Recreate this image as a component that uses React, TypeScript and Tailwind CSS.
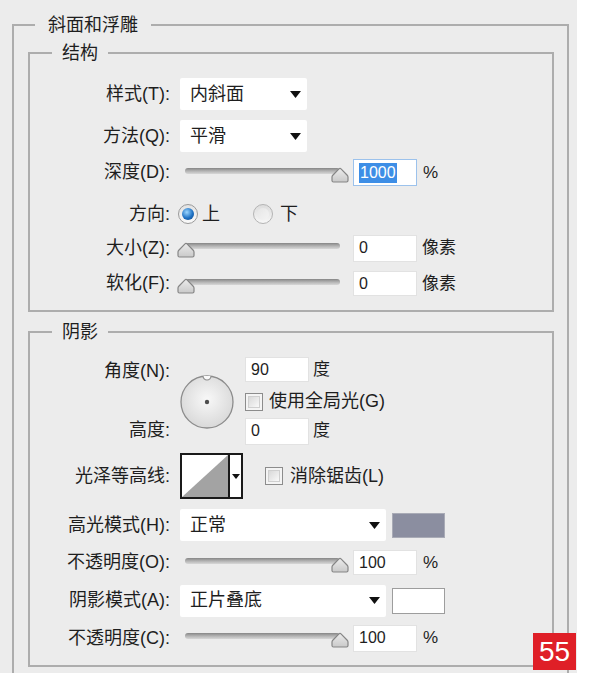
import React from "react";

type Kids = { children?: React.ReactNode };

const Caret = ({ small }: { small?: boolean }) =>
  small ? (
    <svg width="8" height="5" viewBox="0 0 8 5">
      <path d="M0 0H8L4 5Z" fill="#111" />
    </svg>
  ) : (
    <svg width="11" height="7" viewBox="0 0 11 7">
      <path d="M0 0H11L5.5 7Z" fill="#111" />
    </svg>
  );

const Select = ({ value, wide }: { value: string; wide?: boolean }) => (
  <div
    className={`flex h-[32px] items-center justify-between rounded-[2px] bg-white pl-[10px] pr-[6px] text-[18px] ${
      wide ? "w-[206px]" : "w-[127px]"
    }`}
  >
    <span>{value}</span>
    <Caret />
  </div>
);

const NumBox = ({ value, focused, tall }: { value: string; focused?: boolean; tall?: boolean }) => (
  <div
    className={`flex w-[64px] items-center bg-white pl-[5px] text-[16px] ${tall ? "h-[27px]" : "h-[25px]"} ${
      focused ? "border border-[#9cc2ec]" : "border border-[#e2e2e2]"
    }`}
  >
    {focused ? (
      <span className="bg-[#3d8ee6] px-[1px] leading-[20px] text-white">{value}</span>
    ) : (
      <span>{value}</span>
    )}
  </div>
);

const Thumb = () => (
  <svg width="18" height="17" viewBox="0 0 18 17">
    <defs>
      <linearGradient id="tg" x1="0" y1="0" x2="0" y2="1">
        <stop offset="0" stopColor="#ececec" />
        <stop offset="1" stopColor="#c9c9c9" />
      </linearGradient>
    </defs>
    <path
      d="M2.5 16 Q1 16 1 14.5 V11 Q1 10 2 9 L8 2.8 Q9 1.8 10 2.8 L16 9 Q17 10 17 11 V14.5 Q17 16 15.5 16 Z"
      fill="url(#tg)"
      stroke="#858585"
      strokeWidth="1.2"
    />
  </svg>
);

const Slider = ({ full }: { full?: boolean }) => (
  <div className="relative h-[26px] w-[168px]">
    <div className="absolute left-[5px] top-[8px] h-[6px] w-[155px] rounded-full bg-gradient-to-b from-[#868686] via-[#b3b3b3] to-[#d8d8d8]" />
    <div className={`absolute top-[6px] ${full ? "left-[151px]" : "left-[-3px]"}`}>
      <Thumb />
    </div>
  </div>
);

const Checkbox = () => (
  <div className="h-[18px] w-[18px] border border-[#8c8c8c] bg-[#f4f4f4] p-[2px]">
    <div className="h-full w-full border border-[#cfcfcf] bg-gradient-to-br from-[#d9d9d9] to-[#f9f9f9]" />
  </div>
);

const Radio = ({ on }: { on?: boolean }) =>
  on ? (
    <div className="flex h-[20px] w-[20px] items-center justify-center rounded-full border border-[#9a9a9a] bg-gradient-to-b from-[#e2e2e2] to-[#fafafa]">
      <div className="h-[12px] w-[12px] rounded-full bg-[radial-gradient(circle_at_40%_35%,#9bd6ff,#1f72c4_55%,#0b3f80)]" />
    </div>
  ) : (
    <div className="flex h-[20px] w-[20px] items-center justify-center rounded-full border border-[#b4b4b4] bg-gradient-to-b from-[#dcdcdc] to-[#f7f7f7]">
      <div className="h-[12px] w-[12px] rounded-full bg-gradient-to-br from-[#e6e6e6] to-[#f4f4f4]" />
    </div>
  );

const Dial = () => (
  <svg width="54" height="56" viewBox="0 0 54 56" className="ml-[10px]">
    <defs>
      <radialGradient id="dg" cx="50%" cy="45%" r="60%">
        <stop offset="0" stopColor="#f8f8f8" />
        <stop offset="1" stopColor="#d6d6d6" />
      </radialGradient>
    </defs>
    <circle cx="27" cy="29" r="26" fill="url(#dg)" stroke="#8c8c8c" strokeWidth="1.3" />
    <path d="M23 3 A4 4 0 0 0 31 3" fill="#fafafa" stroke="#8c8c8c" strokeWidth="1.2" />
    <circle cx="27" cy="29" r="2.2" fill="#4d4d4d" />
  </svg>
);

const Row = ({ label, className = "", children }: Kids & { label: string; className?: string }) => (
  <div className={`flex items-center ${className}`}>
    <div className="w-[140px] text-right text-[18px]">{label}</div>
    <div className="ml-[10px] flex items-center">{children}</div>
  </div>
);

const Unit = ({ children, gap = "ml-[6px]" }: Kids & { gap?: string }) => (
  <span className={`${gap} text-[17px]`}>{children}</span>
);

export default function App() {
  return (
    <div className="relative h-[686px] w-[589px] bg-white font-['Liberation_Sans','Noto_Sans_CJK_SC',sans-serif] text-[#1e1e1e]">
      <div className="h-[673px] w-[577px] overflow-hidden bg-[#ececec] pl-[12px] pr-[8px] pt-[13px]">
        <fieldset className="border-2 border-[#adadad] pb-[20px]">
          <legend className="ml-[21px] px-[13px] text-[18px] leading-[24px]">斜面和浮雕</legend>

          <fieldset className="ml-[14px] mr-[13px] mt-[4px] border-2 border-[#adadad] pb-[14px] pt-[13px]">
            <legend className="ml-[22px] px-[10px] text-[18px] leading-[24px]">结构</legend>
            <Row label="样式(T):" className="h-[32px]">
              <Select value="内斜面" />
            </Row>
            <Row label="方法(Q):" className="mt-[10px] h-[32px]">
              <Select value="平滑" />
            </Row>
            <Row label="深度(D):" className="mt-[7px] h-[27px]">
              <Slider full />
              <div className="ml-[5px]">
                <NumBox value="1000" focused tall />
              </div>
              <Unit>%</Unit>
            </Row>
            <Row label="方向:" className="mt-[16px] h-[24px]">
              <div className="-ml-[2px] flex items-center text-[18px]">
                <Radio on />
                <span className="ml-[4px]">上</span>
                <div className="ml-[33px]">
                  <Radio />
                </div>
                <span className="ml-[7px]">下</span>
              </div>
            </Row>
            <Row label="大小(Z):" className="mt-[9px] h-[26px]">
              <Slider />
              <div className="ml-[5px]">
                <NumBox value="0" tall />
              </div>
              <Unit gap="ml-[5px]">像素</Unit>
            </Row>
            <Row label="软化(F):" className="mt-[10px] h-[25px]">
              <Slider />
              <div className="ml-[5px]">
                <NumBox value="0" />
              </div>
              <Unit gap="ml-[5px]">像素</Unit>
            </Row>
          </fieldset>

          <fieldset className="ml-[14px] mr-[13px] mt-[8px] border-2 border-[#adadad] pb-[14px] pt-[13px]">
            <legend className="ml-[22px] px-[10px] text-[18px] leading-[24px]">阴影</legend>

            <div className="flex h-[87px] items-center">
              <div className="flex h-full w-[140px] flex-col justify-between text-right text-[18px]">
                <div className="leading-[28px]">角度(N):</div>
                <div className="leading-[28px]">高度:</div>
              </div>
              <Dial />
              <div className="ml-[11px] flex h-full flex-col">
                <div className="flex items-center">
                  <NumBox value="90" />
                  <Unit gap="ml-[4px]">度</Unit>
                </div>
                <div className="mt-[6px] flex h-[26px] items-center">
                  <Checkbox />
                  <span className="ml-[6px] text-[18px]">使用全局光(G)</span>
                </div>
                <div className="mt-[3px] flex items-center">
                  <NumBox value="0" tall />
                  <Unit gap="ml-[4px]">度</Unit>
                </div>
              </div>
            </div>

            <Row label="光泽等高线:" className="mt-[9px] h-[46px]">
              <div className="flex h-[46px] w-[63px] border-2 border-[#1a1a1a] bg-white">
                <svg width="46" height="42" viewBox="0 0 46 42">
                  <path d="M0 42L46 0V42Z" fill="#a3a3a3" />
                </svg>
                <div className="flex flex-1 items-center justify-center border-l-2 border-[#1a1a1a]">
                  <Caret small />
                </div>
              </div>
              <div className="ml-[22px]">
                <Checkbox />
              </div>
              <span className="ml-[7px] text-[18px]">消除锯齿(L)</span>
            </Row>

            <Row label="高光模式(H):" className="mt-[10px] h-[32px]">
              <Select value="正常" wide />
              <div className="ml-[6px] h-[25px] w-[53px] border border-[#a9abb6] bg-[#8b8ea0]" />
            </Row>
            <Row label="不透明度(O):" className="mt-[9px] h-[25px]">
              <Slider full />
              <div className="ml-[5px]">
                <NumBox value="100" />
              </div>
              <Unit>%</Unit>
            </Row>
            <Row label="阴影模式(A):" className="mt-[10px] h-[31px]">
              <Select value="正片叠底" wide />
              <div className="ml-[6px] h-[26px] w-[53px] border border-[#9d9d9d] bg-white" />
            </Row>
            <Row label="不透明度(C):" className="mt-[9px] h-[26px]">
              <Slider full />
              <div className="ml-[5px]">
                <NumBox value="100" tall />
              </div>
              <Unit>%</Unit>
            </Row>
          </fieldset>
        </fieldset>
      </div>

      <div className="absolute left-[533px] top-[633px] flex h-[37px] w-[43px] items-center justify-center bg-[#df1f27] text-[28px] leading-none text-white">
        55
      </div>
    </div>
  );
}
